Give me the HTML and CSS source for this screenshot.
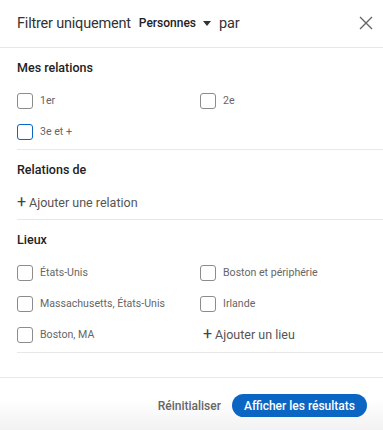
FILE: index.html
```html
<!DOCTYPE html>
<html lang="fr">
<head>
<meta charset="utf-8">
<link rel="stylesheet" href="styles.css">
</head>
<body>
<div class="modal">
  <header class="head">
    <div class="title">
      <span class="t-main">Filtrer uniquement</span>
      <span class="t-select">Personnes
        <svg class="caret" width="8" height="5" viewBox="0 0 8 5"><path d="M0 0h8L4 5z" fill="#333"/></svg>
      </span>
      <span class="t-main">par</span>
    </div>
    <svg class="close" width="14" height="14" viewBox="0 0 14 14"><path d="M1 1L13 13M13 1L1 13" stroke="#666" stroke-width="1.4" fill="none"/></svg>
  </header>

  <section class="sec">
    <h3 class="sec-title">Mes relations</h3>
    <div class="grid">
      <label class="opt"><span class="box"></span>1er</label>
      <label class="opt"><span class="box"></span>2e</label>
      <label class="opt"><span class="box focus"></span>3e et +</label>
    </div>
  </section>

  <section class="sec sec-single">
    <h3 class="sec-title">Relations de</h3>
    <div class="add"><span class="plus">+</span>Ajouter une relation</div>
  </section>

  <section class="sec">
    <h3 class="sec-title">Lieux</h3>
    <div class="grid">
      <label class="opt"><span class="box"></span>États-Unis</label>
      <label class="opt"><span class="box"></span>Boston et périphérie</label>
      <label class="opt"><span class="box"></span>Massachusetts, États-Unis</label>
      <label class="opt"><span class="box"></span>Irlande</label>
      <label class="opt"><span class="box"></span>Boston, MA</label>
      <div class="add add-in-grid"><span class="plus">+</span>Ajouter un lieu</div>
    </div>
  </section>

  <div class="spacer"></div>

  <footer class="foot">
    <button class="btn-reset">Réinitialiser</button>
    <button class="btn-primary">Afficher les résultats</button>
  </footer>
</div>
</body>
</html>
```

FILE: styles.css
```css
* { box-sizing: border-box; }
html, body { margin: 0; padding: 0; background: #fff; }
body {
  font-family: Roboto, "Liberation Sans", Arial, sans-serif;
  color: #222;
  width: 383px;
  height: 430px;
  overflow: hidden;
}
.modal { display: flex; flex-direction: column; height: 430px; }
.head {
  height: 48px;
  flex: none;
  border-bottom: 1px solid #e8e8e8;
  display: flex;
  align-items: center;
  justify-content: space-between;
  padding: 0 10px 0 17px;
}
.title { display: flex; align-items: center; gap: 8px; padding-bottom: 1px; }
.t-main { font-size: 14.5px; letter-spacing: -0.2px; color: #333; }
.t-select { font-size: 12px; font-weight: 500; color: #222; display: flex; align-items: center; gap: 7px; }
.caret { margin-top: 1px; }
.close { margin-bottom: 1px; }
.sec {
  margin-left: 17px;
  border-bottom: 1px solid #e8e8e8;
  padding-bottom: 2px;
}
.sec-single { padding-bottom: 1px; }
.sec-title {
  margin: 0;
  font-size: 12.5px;
  font-weight: 500;
  color: #222;
  height: 37px;
  line-height: 29px;
  padding-top: 5px;
}
.grid {
  display: grid;
  grid-template-columns: 183px 1fr;
  grid-auto-rows: 31px;
}
.opt {
  display: flex;
  align-items: center;
  gap: 7px;
  font-size: 10.6px;
  color: #666;
  height: 31px;
}
.box {
  width: 16px;
  height: 16px;
  border: 1px solid #8c8c8c;
  border-radius: 3px;
  background: #fff;
  flex: none;
}
.box.focus { border: 1.5px solid #0a66c2; }
.add {
  display: flex;
  align-items: center;
  font-size: 12.5px;
  color: #555;
  height: 31px;
}
.add-in-grid { margin-left: 3px; }
.plus { font-size: 16px; margin-right: 3px; color: #444; line-height: 1; margin-top: -2px; }
.spacer { height: 25px; flex: none; border-bottom: 1px solid #e8e8e8; }
.foot {
  flex: 1;
  display: flex;
  justify-content: flex-end;
  align-items: center;
  gap: 11px;
  padding: 3px 16px 0 0;
  background: linear-gradient(#fff 0%, #fff 40%, #f2f2f2 100%);
}
.btn-reset {
  border: 0;
  background: none;
  font-family: inherit;
  font-size: 12px;
  font-weight: 500;
  color: #666;
  padding: 0;
}
.btn-primary {
  border: 0;
  background: #0a66c2;
  color: #fff;
  font-family: inherit;
  font-size: 12px;
  font-weight: 500;
  height: 23px;
  padding: 0 12px;
  border-radius: 12px;
}
```
